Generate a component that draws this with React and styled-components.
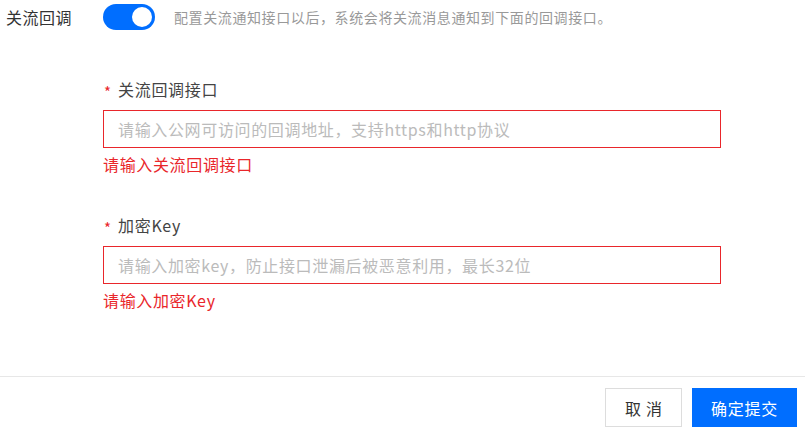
import React, { useState } from "react";
import styled, { createGlobalStyle } from "styled-components";

const GlobalStyle = createGlobalStyle`
  html, body {
    margin: 0;
    padding: 0;
    background: #fff;
  }
  body {
    font-family: "Noto Sans CJK SC", "Noto Sans", "Liberation Sans", sans-serif;
  }
`;

const Page = styled.div`
  min-height: 100vh;
  display: flex;
  flex-direction: column;
  box-sizing: border-box;
`;

const Main = styled.div`
  flex: 1;
`;

const SwitchRow = styled.div`
  display: grid;
  grid-template-columns: 77px 52px auto;
  column-gap: 20px;
  align-items: center;
  padding: 4px 0 0 6px;
`;

const RowLabel = styled.div`
  font-size: 16px;
  line-height: 24px;
  letter-spacing: 0.5px;
  color: #333;
  align-self: start;
  margin-top: 1px;
`;

const Switch = styled.button`
  position: relative;
  width: 52px;
  height: 26px;
  border: none;
  padding: 0;
  border-radius: 13px;
  background: ${(p) => (p.checked ? "#006eff" : "#ccc")};
  cursor: pointer;

  &::after {
    content: "";
    position: absolute;
    top: 3px;
    left: ${(p) => (p.checked ? "29px" : "3px")};
    width: 20px;
    height: 20px;
    border-radius: 50%;
    background: #fff;
  }
`;

const Hint = styled.div`
  font-size: 14px;
  letter-spacing: 0.6px;
  color: #999;
  margin-left: -1px;
`;

const Form = styled.div`
  padding: 47px 0 0 103px;
  width: 618px;
`;

const Field = styled.div`
  margin-bottom: 37px;
`;

const Label = styled.div`
  font-size: 16px;
  line-height: 24px;
  letter-spacing: 0.7px;
  color: #444;
  display: flex;
  align-items: center;
  margin-bottom: 9px;
`;

const Star = styled.span`
  color: #e9262b;
  font-size: 15px;
  width: 14px;
  padding-left: 1px;
  line-height: 1;
  position: relative;
  top: 2px;
`;

const Input = styled.input`
  display: block;
  box-sizing: border-box;
  width: 100%;
  height: 38px;
  border: 1px solid ${(p) => (p.invalid ? "#e9262b" : "#ddd")};
  padding: 0 14px;
  font-family: inherit;
  font-size: 16px;
  letter-spacing: 0.65px;
  color: #333;
  outline: none;

  &::placeholder {
    color: #bbb;
  }
`;

const Error = styled.div`
  font-size: 16px;
  line-height: 24px;
  letter-spacing: 0.65px;
  color: #e9262b;
  margin-top: 4px;
`;

const Footer = styled.div`
  border-top: 1px solid #e7e7e7;
  display: flex;
  justify-content: flex-end;
  gap: 10px;
  padding: 11px 8px 10px;
`;

const Button = styled.button`
  height: 39px;
  box-sizing: border-box;
  font-family: inherit;
  font-size: 16px;
  cursor: pointer;
  border: 1px solid ${(p) => (p.primary ? "#006eff" : "#ddd")};
  background: ${(p) => (p.primary ? "#006eff" : "#fff")};
  color: ${(p) => (p.primary ? "#fff" : "#333")};
  width: ${(p) => (p.primary ? "105px" : "77px")};
  letter-spacing: ${(p) => (p.primary ? "0.7px" : "5px")};
  text-indent: ${(p) => (p.primary ? "0" : "5px")};
`;

const App = () => {
  const [enabled, setEnabled] = useState(true);
  const [url, setUrl] = useState("");
  const [key, setKey] = useState("");

  return (
    <Page>
      <GlobalStyle />
      <Main>
        <SwitchRow>
          <RowLabel>关流回调</RowLabel>
          <Switch checked={enabled} onClick={() => setEnabled(!enabled)} />
          <Hint>配置关流通知接口以后，系统会将关流消息通知到下面的回调接口。</Hint>
        </SwitchRow>
        <Form>
          <Field>
            <Label>
              <Star>*</Star>关流回调接口
            </Label>
            <Input
              invalid
              value={url}
              onChange={(e) => setUrl(e.target.value)}
              placeholder="请输入公网可访问的回调地址，支持https和http协议"
            />
            <Error>请输入关流回调接口</Error>
          </Field>
          <Field>
            <Label>
              <Star>*</Star>加密Key
            </Label>
            <Input
              invalid
              value={key}
              onChange={(e) => setKey(e.target.value)}
              placeholder="请输入加密key，防止接口泄漏后被恶意利用，最长32位"
            />
            <Error>请输入加密Key</Error>
          </Field>
        </Form>
      </Main>
      <Footer>
        <Button>取消</Button>
        <Button primary>确定提交</Button>
      </Footer>
    </Page>
  );
};

export default App;
